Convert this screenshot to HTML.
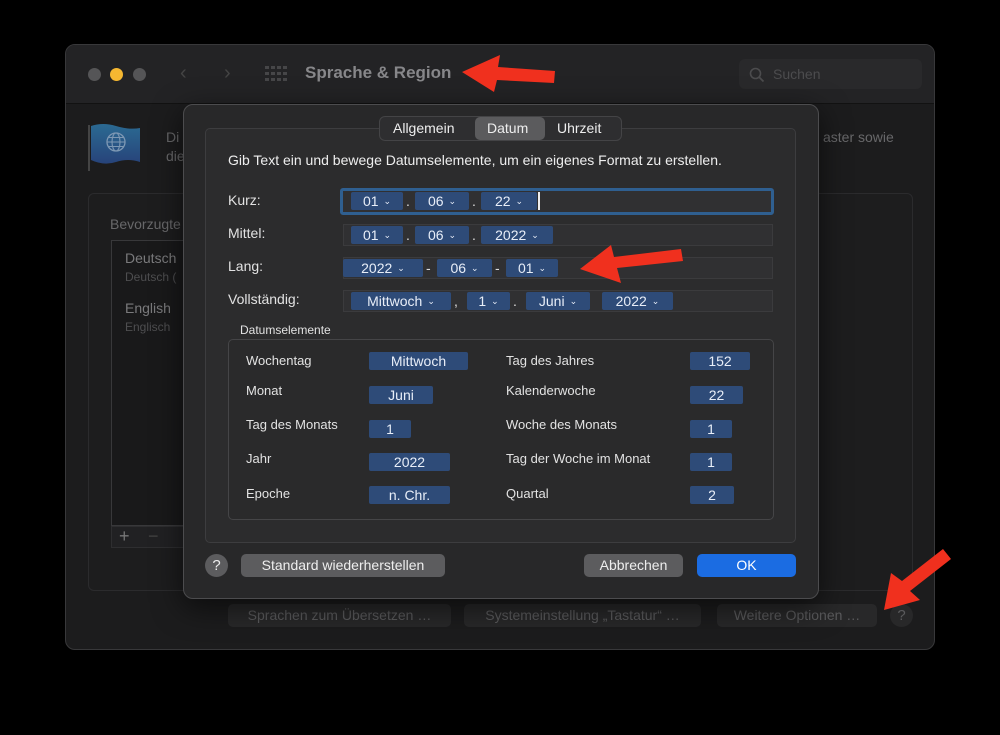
<!DOCTYPE html>
<html><head><meta charset="utf-8"><style>
*{box-sizing:border-box;margin:0;padding:0}
body{width:1000px;height:735px;background:#000;font-family:"Liberation Sans",sans-serif;position:relative;overflow:hidden;color:#e6e6e6}
.a{position:absolute}
.win{left:65px;top:44px;width:870px;height:606px;background:#1c1c1d;border:1px solid #38383a;border-radius:10px;overflow:hidden}
.tb{left:0;top:0;width:870px;height:59px;background:#232325;border-bottom:1px solid #121212}
.dot{width:13px;height:13px;border-radius:50%;top:23px}
.t{font-size:14px;white-space:nowrap}
.tok{position:absolute;height:18px;background:#2e4b78;color:#e8eef8;font-size:14px;line-height:18px;text-align:center;border-radius:2px}
.tok i{font-style:normal;font-size:9px;margin-left:5px;position:relative;top:-2px}
.fld{position:absolute;left:343px;width:430px;height:22px;background:#303032;border:1px solid #3b3b3d}
.sep{position:absolute;font-size:14px;color:#ddd}
.lbl{position:absolute;font-size:13px;color:#e2e2e2}
.btn{position:absolute;height:23px;border-radius:5px;background:#5c5c5e;color:#eee;font-size:14px;line-height:23px;text-align:center}
.dbtn{position:absolute;height:23px;border-radius:5px;background:#282829;color:#5a5a5c;font-size:14px;line-height:23px;text-align:center}
</style></head><body>
<div class="a win">
 <div class="a tb"></div>
 <div class="a dot" style="left:22px;background:#555557"></div>
 <div class="a dot" style="left:44px;background:#f5b731"></div>
 <div class="a dot" style="left:67px;background:#555557"></div>
 <div class="a" style="left:114px;top:17px;color:#444;font-size:20px">&#8249;</div>
 <div class="a" style="left:158px;top:17px;color:#444;font-size:20px">&#8250;</div>
 <svg class="a" style="left:199px;top:21px" width="22" height="16"><g fill="#464648"><rect x="0" y="0" width="4" height="3"/><rect x="6" y="0" width="4" height="3"/><rect x="12" y="0" width="4" height="3"/><rect x="18" y="0" width="4" height="3"/><rect x="0" y="6" width="4" height="3"/><rect x="6" y="6" width="4" height="3"/><rect x="12" y="6" width="4" height="3"/><rect x="18" y="6" width="4" height="3"/><rect x="0" y="12" width="4" height="3"/><rect x="6" y="12" width="4" height="3"/><rect x="12" y="12" width="4" height="3"/><rect x="18" y="12" width="4" height="3"/></g></svg>
 <div class="a" style="left:239px;top:18px;font-size:17px;font-weight:bold;color:#87878a">Sprache &amp; Region</div>
 <div class="a" style="left:673px;top:14px;width:183px;height:30px;background:#29292b;border-radius:6px"></div>
 <svg class="a" style="left:683px;top:22px" width="16" height="16"><circle cx="6.5" cy="6.5" r="5" stroke="#4c4c4e" stroke-width="1.6" fill="none"/><path d="M10 10l4.5 4.5" stroke="#4c4c4e" stroke-width="1.8"/></svg>
 <div class="a" style="left:707px;top:21px;font-size:14px;color:#4c4c4e">Suchen</div>
 <svg class="a" style="left:22px;top:77px" width="54" height="50"><defs><linearGradient id="g" x1="0" y1="0" x2="0" y2="1"><stop offset="0" stop-color="#2b6a92"/><stop offset="1" stop-color="#27437a"/></linearGradient></defs><rect x="0" y="3" width="2" height="46" fill="#444"/><path d="M3 4 Q15 0 28 4 T52 6 L52 40 Q40 36 28 40 T3 38Z" fill="url(#g)"/><circle cx="28" cy="20" r="9" stroke="#7d98b4" stroke-width="1.3" fill="none"/><ellipse cx="28" cy="20" rx="4" ry="9" stroke="#7d98b4" stroke-width="1.1" fill="none"/><path d="M19 20h18M20 15.5h16M20 24.5h16" stroke="#7d98b4" stroke-width="1"/></svg>
 <div class="a t" style="left:100px;top:84px;color:#68686a">Di</div>
 <div class="a t" style="left:100px;top:103px;color:#68686a">die</div>
 <div class="a t" style="left:757px;top:84px;color:#68686a">aster sowie</div>
 <div class="a" style="left:22px;top:148px;width:825px;height:398px;border:1px solid #2b2b2d;border-radius:6px;background:#1d1d1e"></div>
 <div class="a t" style="left:44px;top:171px;color:#68686a">Bevorzugte</div>
 <div class="a" style="left:45px;top:195px;width:80px;height:286px;border:1px solid #38383a;background:#19191a"></div>
 <div class="a t" style="left:59px;top:205px;color:#7a7a7c">Deutsch</div>
 <div class="a" style="left:59px;top:225px;font-size:12px;color:#4e4e50">Deutsch (</div>
 <div class="a t" style="left:59px;top:255px;color:#7a7a7c">English</div>
 <div class="a" style="left:59px;top:275px;font-size:12px;color:#4e4e50">Englisch</div>
 <div class="a" style="left:45px;top:481px;width:80px;height:22px;border:1px solid #2e2e30;background:#212123"></div>
 <div class="a" style="left:53px;top:481px;color:#777;font-size:18px">+</div>
 <div class="a" style="left:82px;top:481px;color:#444;font-size:18px">&#8722;</div>
 <div class="a dbtn" style="left:162px;top:559px;width:223px">Sprachen zum Übersetzen …</div>
 <div class="a dbtn" style="left:398px;top:559px;width:237px">Systemeinstellung „Tastatur“ …</div>
 <div class="a dbtn" style="left:651px;top:559px;width:160px">Weitere Optionen …</div>
 <div class="a" style="left:824px;top:559px;width:23px;height:23px;border-radius:50%;background:#282829;color:#5a5a5c;font-size:15px;text-align:center;line-height:23px">?</div>
</div>

<div class="a" style="left:183px;top:104px;width:636px;height:495px;background:#282829;border:1px solid #4c4c4e;border-radius:10px;box-shadow:0 8px 30px rgba(0,0,0,.6)"></div>
<div class="a" style="left:205px;top:128px;width:591px;height:415px;background:#2c2c2d;border:1px solid #3d3d3f;border-radius:5px"></div>
<div class="a" style="left:379px;top:116px;width:243px;height:25px;background:#2e2e30;border:1px solid #444446;border-radius:6px"></div>
<div class="a" style="left:475px;top:117px;width:70px;height:23px;background:#5b5b5d;border-radius:5px"></div>
<div class="a t" style="left:393px;top:120px;color:#eee">Allgemein</div>
<div class="a t" style="left:487px;top:120px;color:#eee">Datum</div>
<div class="a t" style="left:557px;top:120px;color:#eee">Uhrzeit</div>
<div class="a t" style="left:228px;top:152px;color:#eee">Gib Text ein und bewege Datumselemente, um ein eigenes Format zu erstellen.</div>

<div class="lbl" style="left:228px;top:192px;font-size:14px">Kurz:</div>
<div class="lbl" style="left:228px;top:225px;font-size:14px">Mittel:</div>
<div class="lbl" style="left:228px;top:258px;font-size:14px">Lang:</div>
<div class="lbl" style="left:228px;top:291px;font-size:14px">Vollständig:</div>

<div class="fld" style="left:340px;top:188px;width:434px;height:27px;border:3px solid #2f5f90;border-radius:3px"></div>
<div class="tok" style="left:351px;top:192px;width:52px">01<i>⌄</i></div><div class="sep" style="left:406px;top:193px">.</div>
<div class="tok" style="left:415px;top:192px;width:54px">06<i>⌄</i></div><div class="sep" style="left:472px;top:193px">.</div>
<div class="tok" style="left:481px;top:192px;width:56px">22<i>⌄</i></div>
<div class="a" style="left:538px;top:192px;width:2px;height:18px;background:#eee"></div>

<div class="fld" style="top:224px"></div>
<div class="tok" style="left:351px;top:226px;width:52px">01<i>⌄</i></div><div class="sep" style="left:406px;top:227px">.</div>
<div class="tok" style="left:415px;top:226px;width:54px">06<i>⌄</i></div><div class="sep" style="left:472px;top:227px">.</div>
<div class="tok" style="left:481px;top:226px;width:72px">2022<i>⌄</i></div>

<div class="fld" style="top:257px"></div>
<div class="tok" style="left:343px;top:259px;width:80px">2022<i>⌄</i></div><div class="sep" style="left:426px;top:260px">-</div>
<div class="tok" style="left:437px;top:259px;width:55px">06<i>⌄</i></div><div class="sep" style="left:495px;top:260px">-</div>
<div class="tok" style="left:506px;top:259px;width:52px">01<i>⌄</i></div>

<div class="fld" style="top:290px"></div>
<div class="tok" style="left:351px;top:292px;width:100px">Mittwoch<i>⌄</i></div><div class="sep" style="left:454px;top:293px">,</div>
<div class="tok" style="left:467px;top:292px;width:43px">1<i>⌄</i></div><div class="sep" style="left:513px;top:293px">.</div>
<div class="tok" style="left:526px;top:292px;width:64px">Juni<i>⌄</i></div>
<div class="tok" style="left:602px;top:292px;width:71px">2022<i>⌄</i></div>

<div class="lbl" style="left:240px;top:323px;font-size:12px">Datumselemente</div>
<div class="a" style="left:228px;top:339px;width:546px;height:181px;border:1px solid #454547;border-radius:5px;background:#2a2a2b"></div>
<div class="lbl" style="left:246px;top:353px">Wochentag</div>
<div class="lbl" style="left:246px;top:383px">Monat</div>
<div class="lbl" style="left:246px;top:417px">Tag des Monats</div>
<div class="lbl" style="left:246px;top:451px">Jahr</div>
<div class="lbl" style="left:246px;top:486px">Epoche</div>
<div class="lbl" style="left:506px;top:353px">Tag des Jahres</div>
<div class="lbl" style="left:506px;top:383px">Kalenderwoche</div>
<div class="lbl" style="left:506px;top:417px">Woche des Monats</div>
<div class="lbl" style="left:506px;top:451px">Tag der Woche im Monat</div>
<div class="lbl" style="left:506px;top:486px">Quartal</div>
<div class="tok" style="left:369px;top:352px;width:99px">Mittwoch</div>
<div class="tok" style="left:369px;top:386px;width:64px">Juni</div>
<div class="tok" style="left:369px;top:420px;width:42px">1</div>
<div class="tok" style="left:369px;top:453px;width:81px">2022</div>
<div class="tok" style="left:369px;top:486px;width:81px">n. Chr.</div>
<div class="tok" style="left:690px;top:352px;width:60px">152</div>
<div class="tok" style="left:690px;top:386px;width:53px">22</div>
<div class="tok" style="left:690px;top:420px;width:42px">1</div>
<div class="tok" style="left:690px;top:453px;width:42px">1</div>
<div class="tok" style="left:690px;top:486px;width:44px">2</div>

<div class="a" style="left:205px;top:554px;width:23px;height:23px;border-radius:50%;background:#5c5c5e;color:#eee;font-size:15px;text-align:center;line-height:23px">?</div>
<div class="btn" style="left:241px;top:554px;width:204px">Standard wiederherstellen</div>
<div class="btn" style="left:584px;top:554px;width:99px">Abbrechen</div>
<div class="btn" style="left:697px;top:554px;width:99px;background:#1b6ce2;color:#fff">OK</div>

<svg class="a" style="left:0;top:0" width="1000" height="735">
<g fill="#f0301e">
<path d="M462 72 L500 55 L498 67 L555 71 L554 83 L497 80 L494 92 Z"/>
<path d="M580 269 L611 245 L614 257 L681 249 L683 261 L617 268 L621 283 Z"/>
<path d="M884 610 L891 573 L902 581 L943 549 L951 559 L910 591 L920 600 Z"/>
</g></svg>
</body></html>
